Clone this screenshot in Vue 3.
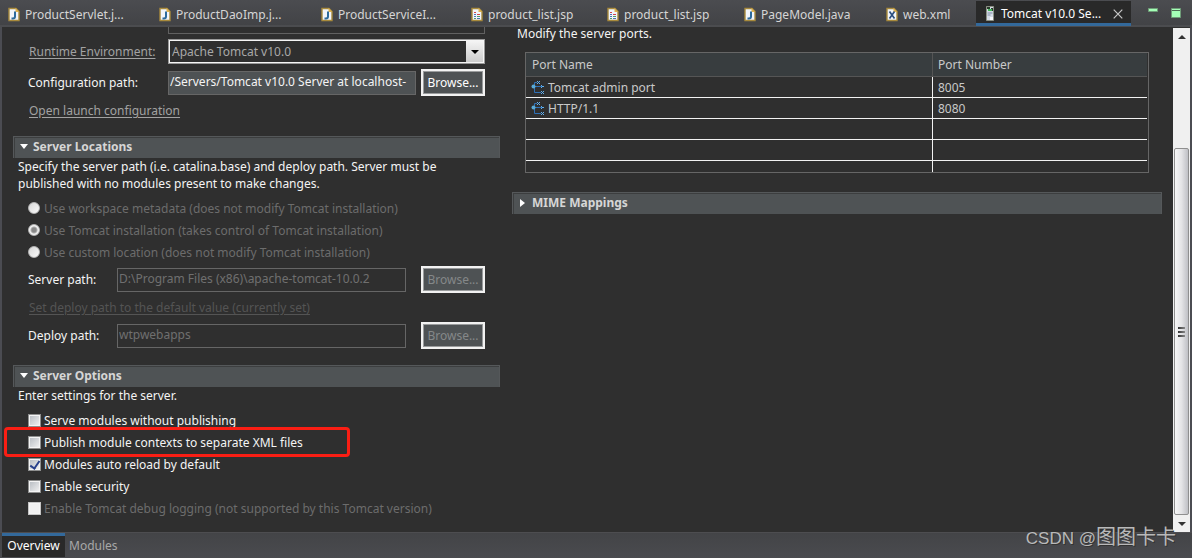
<script setup>
import { ref } from 'vue'

const tabs = [
  { icon: 'java', label: 'ProductServlet.j...' },
  { icon: 'java', label: 'ProductDaoImp.j...' },
  { icon: 'java', label: 'ProductServiceI...' },
  { icon: 'jsp', label: 'product_list.jsp' },
  { icon: 'jsp', label: 'product_list.jsp' },
  { icon: 'java', label: 'PageModel.java' },
  { icon: 'xml', label: 'web.xml' },
  { icon: 'server', label: 'Tomcat v10.0 Se...', active: true },
]

const location = ref('tomcat')
const locations = [
  { id: 'workspace', label: 'Use workspace metadata (does not modify Tomcat installation)' },
  { id: 'tomcat', label: 'Use Tomcat installation (takes control of Tomcat installation)' },
  { id: 'custom', label: 'Use custom location (does not modify Tomcat installation)' },
]

const options = ref([
  { id: 'serve', label: 'Serve modules without publishing', on: false },
  { id: 'publish', label: 'Publish module contexts to separate XML files', on: false, marked: true },
  { id: 'reload', label: 'Modules auto reload by default', on: true },
  { id: 'security', label: 'Enable security', on: false },
  { id: 'debug', label: 'Enable Tomcat debug logging (not supported by this Tomcat version)', on: false, disabled: true },
])

const ports = [
  { name: 'Tomcat admin port', number: '8005' },
  { name: 'HTTP/1.1', number: '8080' },
]

const configPath = ref('/Servers/Tomcat v10.0 Server at localhost-')
const serverPath = ref('D:\\Program Files (x86)\\apache-tomcat-10.0.2')
const deployPath = ref('wtpwebapps')
</script>

<template>
  <div class="editor">
    <header class="tabbar">
      <nav class="tabs">
        <button v-for="(tab, i) in tabs" :key="i" type="button" class="tab" :class="{ active: tab.active }">
          <svg class="file" width="12" height="15" viewBox="0 0 12 15" aria-hidden="true">
            <template v-if="tab.icon !== 'server'">
              <path d="M1 1.5h7l3 3V13.5H1z" fill="#f1f5fb" stroke="#a88a3c" stroke-width="1.4" />
              <path d="M7.5 1v4H11z" fill="#e0b350" />
              <path v-if="tab.icon === 'java'" d="M7 4.5v5q0 2-2 2H3.5" fill="none" stroke="#2c6a9c" stroke-width="2" />
              <g v-else-if="tab.icon === 'jsp'" stroke-width="1">
                <path d="M3 5.5h2M6 7.5h3" stroke="#d0454c" />
                <path d="M3 7.5h2M3 9.5h2M6 11.5h3" stroke="#4a74b8" />
                <path d="M6 9.5h3M3 11.5h2" stroke="#4f9b6a" />
              </g>
              <path v-else d="M3.5 4.5l5 7M8.5 4.5l-5 7" stroke="#2c4f80" stroke-width="1.7" />
            </template>
            <template v-else>
              <path d="M2.5.5h7v14h-7z" fill="#d5dbe6" stroke="#8c9184" />
              <path d="M3 1h3v2H3zM7 2h2v3H7z" fill="#2b3a2e" />
              <path d="M4 3h4v2H4z" fill="#43b95a" />
              <path d="M3.5 7h5M3.5 9h3" stroke="#7f8ba5" />
              <path d="M6 11h3v3H6z" fill="#f7f8fc" />
            </template>
          </svg>
          <span>{{ tab.label }}</span>
          <svg v-if="tab.active" class="close" width="10" height="10" viewBox="0 0 10 10" aria-hidden="true">
            <path d="M.7.7l8.6 8.6M9.3.7L.7 9.3" stroke="#c8c8c8" stroke-width="1.2" />
          </svg>
        </button>
      </nav>
      <div class="window-actions">
        <button type="button" aria-label="Minimize">
          <svg width="10" height="10" viewBox="0 0 10 10"><path d="M.5.5h9v3h-9z" fill="#a4ffb6" stroke="#6f9c78" /></svg>
        </button>
        <button type="button" aria-label="Maximize">
          <svg width="10" height="10" viewBox="0 0 10 10"><path d="M.5.5h9v9h-9z" fill="#a4ffb6" stroke="#6f9c78" /><path d="M1 2.5h8" stroke="#4d6b53" /></svg>
        </button>
      </div>
    </header>

    <main class="page">
      <div class="left">
        <div class="clipped"></div>
        <div class="row env">
          <a href="#" class="link">Runtime Environment:</a>
          <div class="combo">
            <select aria-label="Runtime Environment"><option>Apache Tomcat v10.0</option></select>
            <span class="arrow"><svg width="8" height="4" viewBox="0 0 8 4"><path d="M0 0h8L4 4z" fill="#000" /></svg></span>
          </div>
        </div>
        <div class="row config">
          <label for="config">Configuration path:</label>
          <input id="config" v-model="configPath" class="text filled" type="text" readonly />
          <button type="button" class="browse">Browse...</button>
        </div>
        <p class="line launch"><a href="#" class="link">Open launch configuration</a></p>

        <section class="locations">
          <h2><svg width="8" height="5" viewBox="0 0 8 5"><path d="M0 0h8L4 5z" fill="#fff" /></svg>Server Locations</h2>
          <p class="desc">Specify the server path (i.e. catalina.base) and deploy path. Server must be<br />published with no modules present to make changes.</p>
          <div class="choices">
            <label v-for="item in locations" :key="item.id" class="choice dim">
              <input v-model="location" type="radio" name="location" :value="item.id" disabled />{{ item.label }}
            </label>
          </div>
          <div class="row path">
            <label for="server">Server path:</label>
            <input id="server" v-model="serverPath" class="text" type="text" disabled />
            <button type="button" class="browse" disabled>Browse...</button>
          </div>
          <p class="line deploy"><a href="#" class="link faint">Set deploy path to the default value (currently set)</a></p>
          <div class="row path">
            <label for="deploy">Deploy path:</label>
            <input id="deploy" v-model="deployPath" class="text" type="text" disabled />
            <button type="button" class="browse" disabled>Browse...</button>
          </div>
        </section>

        <section class="options">
          <h2><svg width="8" height="5" viewBox="0 0 8 5"><path d="M0 0h8L4 5z" fill="#fff" /></svg>Server Options</h2>
          <p class="desc">Enter settings for the server.</p>
          <div class="choices">
            <label v-for="item in options" :key="item.id" class="choice" :class="{ dim: item.disabled, marked: item.marked }">
              <input v-model="item.on" type="checkbox" :disabled="item.disabled" />{{ item.label }}
            </label>
          </div>
        </section>
      </div>

      <div class="right">
        <p class="modify">Modify the server ports.</p>
        <div class="grid">
          <table>
            <thead>
              <tr><th scope="col">Port Name</th><th scope="col">Port Number</th></tr>
            </thead>
            <tbody>
              <tr v-for="port in ports" :key="port.name">
                <td>
                  <svg class="port" width="15" height="14" viewBox="0 0 15 14" aria-hidden="true">
                    <path d="M3.5 5V2.5H6M3 6.5h8M3.5 8v4.5H10" fill="none" stroke="#2f70b5" />
                    <circle cx="2.5" cy="6.5" r="2" fill="#58a9d6" />
                    <path d="M6 1h1v1H6zM8 1h1v1H8zM7 2h1v1H7zM6 3h1v1H6zM8 3h1v1H8zM10 5h1v1h-1zM11 6h2v1h-2zM10 7h1v1h-1zM10 11h1v1h-1zM12 11h1v1h-1zM11 12h1v1h-1zM10 13h1v1h-1zM12 13h1v1h-1z" fill="#62b1f0" />
                  </svg>{{ port.name }}
                </td>
                <td>{{ port.number }}</td>
              </tr>
              <tr v-for="n in 2" :key="n"><td></td><td></td></tr>
              <tr class="last"><td></td><td></td></tr>
            </tbody>
          </table>
        </div>
        <h2><svg class="side" width="5" height="8" viewBox="0 0 5 8"><path d="M0 0v8l5-4z" fill="#fff" /></svg>MIME Mappings</h2>
      </div>

      <div class="scrollbar" aria-hidden="true">
        <span class="step"><svg width="8" height="4" viewBox="0 0 8 4"><path d="M0 4h8L4 0z" fill="#333" /></svg></span>
        <div class="track">
          <div class="thumb"><i></i><i></i><i></i></div>
        </div>
        <span class="step"><svg width="8" height="4" viewBox="0 0 8 4"><path d="M0 0h8L4 4z" fill="#333" /></svg></span>
      </div>
    </main>

    <footer class="pages">
      <button type="button" class="active">Overview</button>
      <button type="button">Modules</button>
    </footer>
    <span class="watermark">CSDN @<span>图图卡卡</span></span>
  </div>
</template>

<style>
body {
  margin: 0;
  background: #2f2f2f;
}
</style>

<style scoped>
.editor,
.editor *,
.marked::before {
  box-sizing: border-box;
}
.editor {
  position: relative;
  display: flex;
  flex-direction: column;
  height: 100vh;
  overflow: hidden;
  background: #2f2f2f;
  color: #f4f4f4;
  font: 12px/17px "Noto Sans", "Noto Sans CJK SC", sans-serif;
}
button,
input,
select {
  margin: 0;
  font: inherit;
  color: inherit;
}
p,
h2 {
  margin: 0;
}
svg {
  display: block;
  flex: none;
}
.tabbar {
  display: flex;
  justify-content: space-between;
  flex: none;
  height: 27px;
  border-bottom: 2px solid #4b4c4f;
  background: linear-gradient(#4b4c50, #424346);
}
.tabs {
  display: grid;
  grid-template-columns: 151px 162px 150px 136px 137px 142px 98px 155px;
}
.tab {
  display: flex;
  align-items: center;
  gap: 5px;
  height: 25px;
  padding: 3px 0 0 8px;
  border: 0;
  background: none;
  color: #d5d5d5;
  white-space: nowrap;
}
.tab.active {
  margin-top: 1px;
  height: 25px;
  border-bottom: 3px solid #33699b;
  background: #292929;
  color: #fff;
}
.close {
  margin: 1px 8px 0 auto;
}
.window-actions {
  display: flex;
  align-items: flex-start;
  gap: 13px;
  padding: 8px 11px 0 0;
}
.window-actions button {
  padding: 0;
  border: 0;
  background: none;
}
.page {
  display: flex;
  flex: 1;
  min-height: 0;
  overflow: hidden;
  border: solid #4b4c52;
  border-width: 0 2px;
}
.left {
  width: 498px;
  flex: none;
  padding-left: 11px;
}
.clipped {
  height: 7px;
  margin: 0 15px 5px 155px;
  border: 1px solid #616161;
  border-top: 0;
}
.row {
  display: flex;
  align-items: center;
  padding: 0 15px;
}
.link {
  color: #a2a2a2;
  text-decoration: underline;
  text-underline-offset: 2px;
}
.link.faint {
  color: #545454;
}
.env .link,
.config label {
  width: 140px;
  flex: none;
  white-space: nowrap;
}
.env .link {
  padding-left: 1px;
}
.combo {
  display: flex;
  flex: 1;
  height: 25px;
  border: 1px solid #9a9a9a;
  outline: 1px solid #f5f5f5;
  outline-offset: -2px;
  padding: 1px;
}
.combo select {
  flex: 1;
  min-width: 0;
  padding: 0 0 0 2px;
  border: 0;
  background: #2f2f2f;
  color: #a8a8a8;
  appearance: none;
}
.arrow {
  display: grid;
  place-items: center;
  width: 17px;
  background: linear-gradient(#f4f4f4, #cdcdcd);
}
.config {
  margin-top: 5px;
}
.text {
  flex: 1;
  min-width: 0;
  height: 24px;
  padding: 0 0 3px 1px;
  border: 1px solid #666;
  border-radius: 0;
  background: #2f2f2f;
}
.text:disabled {
  color: #6f6f6f;
}
.text.filled {
  background: #4e5254;
}
.browse {
  width: 64px;
  height: 27px;
  flex: none;
  margin-left: 5px;
  padding: 0;
  border: 2px solid #f2f2f2;
  background: #4e5254;
  box-shadow: inset 0 0 0 1px #9a9c9d;
  color: #fff;
}
.browse:disabled {
  color: #858889;
}
.line {
  padding-left: 16px;
}
.launch {
  margin-top: 6px;
}
h2 {
  display: flex;
  align-items: center;
  gap: 5px;
  height: 22px;
  padding: 0 0 2px 6px;
  border: 1px solid #55585a;
  border-bottom: 0;
  box-shadow: inset 1px 1px #3c3e3f;
  background: #4f5355;
  color: #d6d6d6;
  font-size: 12px;
  line-height: 17px;
}
.locations {
  margin-top: 17px;
}
.desc {
  padding-left: 5px;
  white-space: nowrap;
}
.choices {
  margin-top: 5px;
}
.choice {
  position: relative;
  display: flex;
  align-items: center;
  gap: 4px;
  height: 22px;
  margin-left: 15px;
  white-space: nowrap;
}
.dim {
  color: #6c6c6c;
}
.choice input {
  width: 12px;
  height: 12px;
  flex: none;
  appearance: none;
  border: 1px solid #b5b5b5;
  background: #f2f2f2;
}
.choice input[type="radio"] {
  border-radius: 50%;
  background: linear-gradient(135deg, #d8d8d8, #fafafa);
}
.choice input[type="radio"]:checked {
  background: radial-gradient(circle, #888 0 2px, #b0b0b0 3px, #f2f2f2 4px);
}
.choice input[type="checkbox"] {
  width: 13px;
  height: 13px;
  margin-right: -1px;
  border-color: #8e8f8f;
  box-shadow: inset 0 0 0 1px #f4f4f4;
  background: linear-gradient(135deg, #b5bac0, #f4f4f4);
}
.choice input[type="checkbox"]:disabled {
  border-color: #c5c5c5;
  background: #f0f0f0;
}
.choice input[type="checkbox"]:checked::after {
  content: "";
  display: block;
  width: 4px;
  height: 8px;
  margin: 0 0 0 3px;
  border: solid #27408b;
  border-width: 0 2px 2px 0;
  transform: rotate(35deg);
}
.marked::before {
  content: "";
  position: absolute;
  inset: -4px auto -4px -24px;
  width: 346px;
  border: 3px solid #fa1e14;
  border-radius: 4px;
}
.path label {
  width: 89px;
  flex: none;
}
.path .browse {
  margin-left: 15px;
}
.locations .choices {
  margin: 5px 0 3px;
}
.deploy {
  padding: 6px 0 6px 16px;
}
.options {
  margin-top: 16px;
}
.right {
  flex: 1;
  min-width: 0;
  padding: 0 11px 0 12px;
}
.modify {
  padding-left: 5px;
  line-height: 13px;
}
.grid {
  height: 121px;
  margin: 12px 13px 19px;
  padding-right: 1px;
  overflow: hidden;
  border: 1px solid #666;
}
table {
  width: 100%;
  table-layout: fixed;
  border-collapse: separate;
  border-spacing: 0;
}
th,
td {
  height: 21px;
  padding: 0 0 0 5px;
  border-bottom: 1px solid #f2f2f2;
  color: #c9c9c9;
  font-weight: normal;
  text-align: left;
  vertical-align: middle;
}
th {
  height: 24px;
  padding-left: 6px;
  border-bottom-color: #555;
  background: #383d3f;
}
th:first-child {
  width: 406px;
}
th + th {
  border-left: 1px solid #555;
  padding-left: 5px;
}
td + td {
  border-left: 1px solid #f2f2f2;
}
.port {
  display: inline-block;
  margin-right: 2px;
  vertical-align: -2px;
}
.side {
  margin: 0 2px 0 1px;
}
.scrollbar {
  display: flex;
  flex-direction: column;
  width: 17px;
  flex: none;
  margin-top: 1px;
  background: #f0f0f0;
}
.step {
  display: grid;
  place-items: center;
  height: 17px;
  flex: none;
}
.track {
  display: flex;
  flex: 1;
  flex-direction: column;
  justify-content: flex-end;
}
.thumb {
  display: flex;
  flex-direction: column;
  align-items: center;
  justify-content: center;
  gap: 2px;
  height: 78%;
  margin: 0 1px;
  border: 1px solid #8f8f8f;
  border-radius: 2px;
  background: linear-gradient(90deg, #f7f7f7, #e4e4e6 50%, #bfc0c5);
}
.thumb i {
  width: 7px;
  height: 2px;
  background: linear-gradient(90deg, #333, #888);
}
.pages {
  display: flex;
  flex: none;
  height: 26px;
  padding-left: 2px;
  border-top: 1px solid #4d4d50;
  background: linear-gradient(#434447, #4a4b4f);
}
.pages button {
  height: 24px;
  padding: 0 4px 2px;
  border: 0;
  border-top: 3px solid transparent;
  background: none;
  color: #a8a8a8;
}
.pages .active {
  width: 63px;
  border-top-color: #33699b;
  background: #292929;
  color: #fff;
}
.watermark {
  position: absolute;
  right: 16px;
  bottom: 7px;
  color: #b9b9b9;
  font: 17px/24px "Liberation Sans", "Noto Sans CJK SC", sans-serif;
  text-shadow: 1px 1px #333;
}
.watermark span {
  font-size: 20px;
}
</style>
